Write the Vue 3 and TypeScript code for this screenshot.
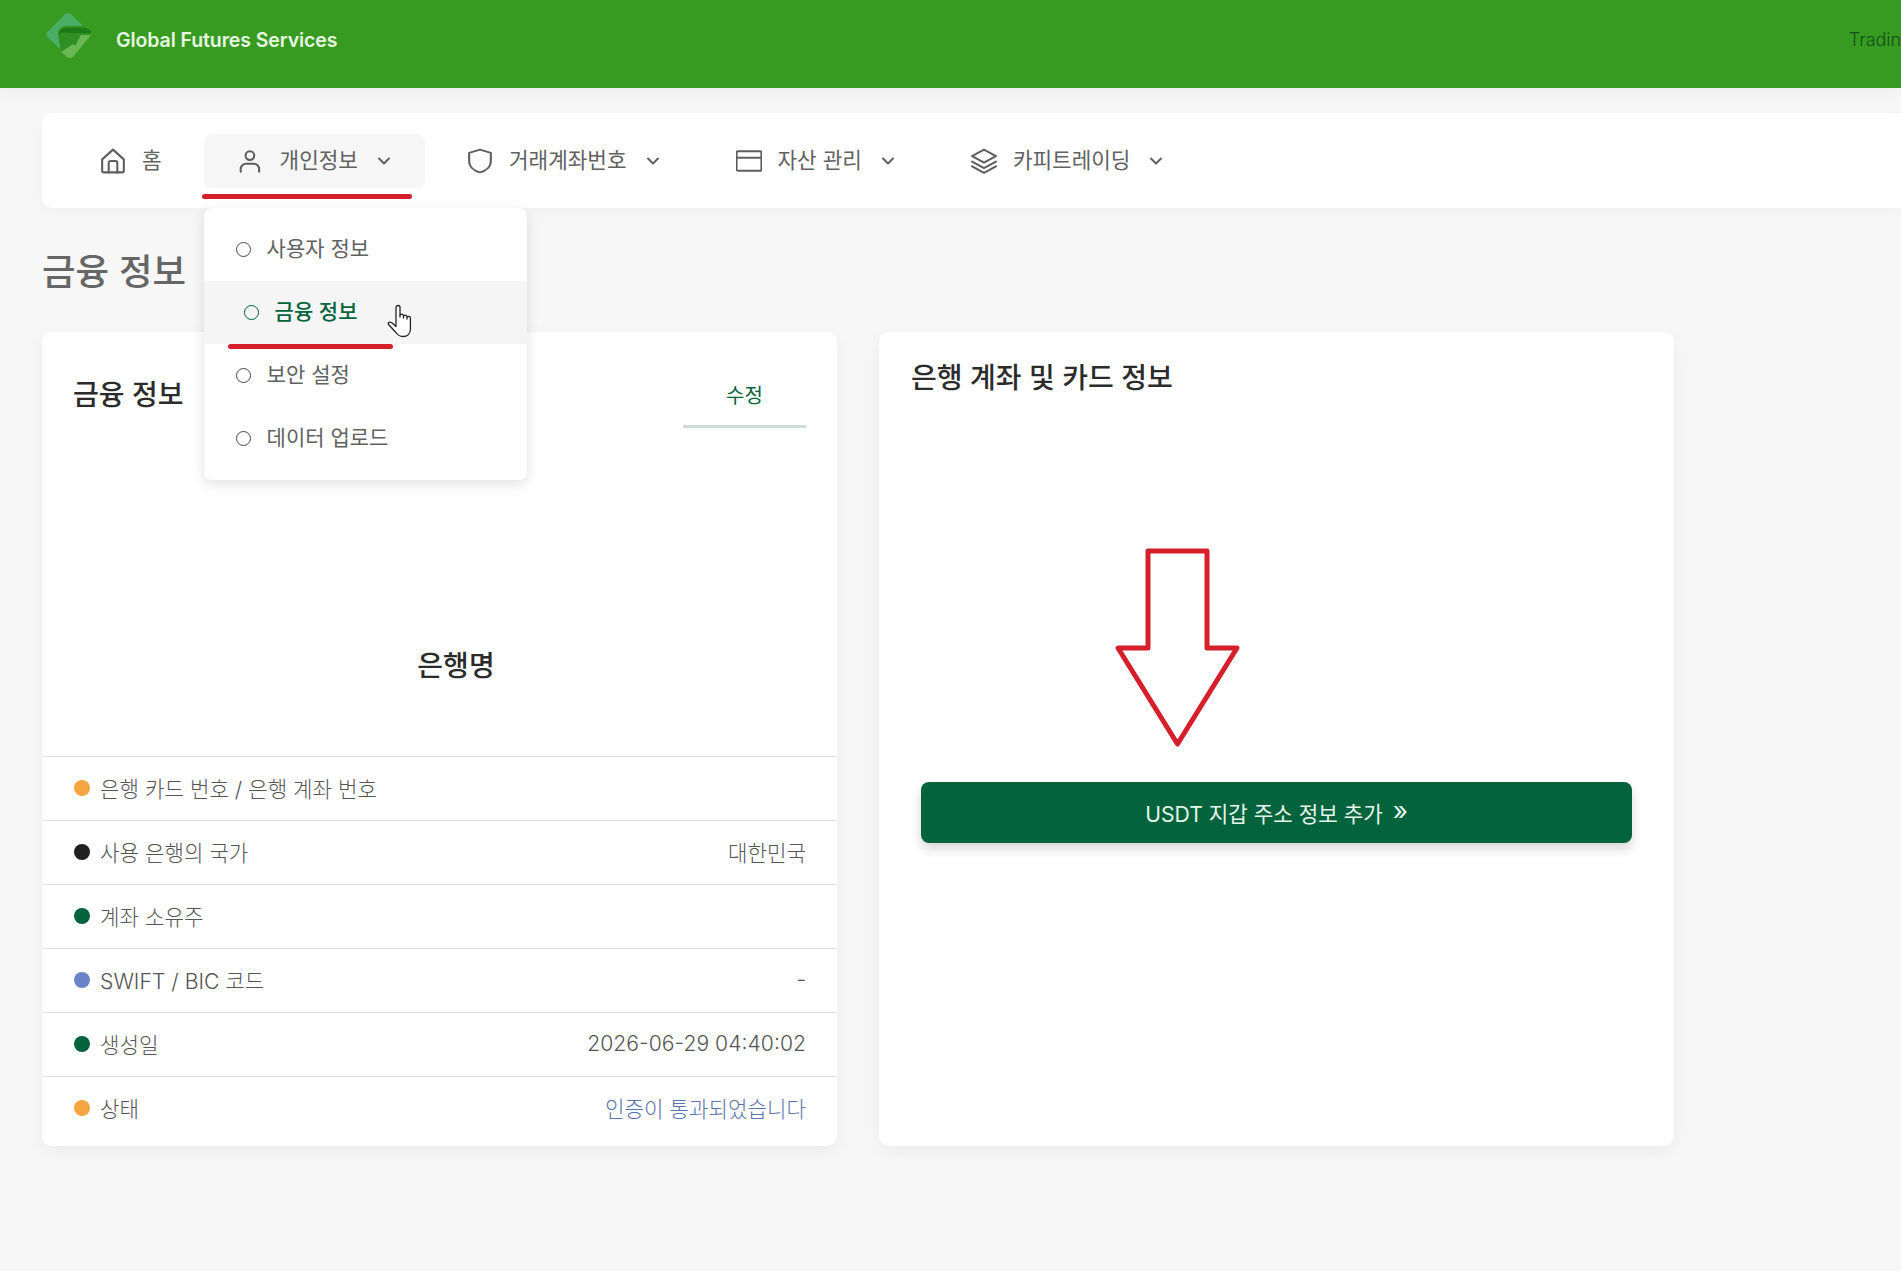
<script setup lang="ts">
interface InfoRow {
  label: string
  value?: string
  dot: string
  link?: boolean
}

type NavIcon = 'home' | 'user' | 'shield' | 'card' | 'layers'

const navItems: { label: string; icon: NavIcon; caret: boolean; active?: boolean }[] = [
  { label: '홈', icon: 'home', caret: false },
  { label: '개인정보', icon: 'user', caret: true, active: true },
  { label: '거래계좌번호', icon: 'shield', caret: true },
  { label: '자산 관리', icon: 'card', caret: true },
  { label: '카피트레이딩', icon: 'layers', caret: true },
]

const menuItems = [
  { label: '사용자 정보' },
  { label: '금융 정보', hover: true },
  { label: '보안 설정' },
  { label: '데이터 업로드' },
]

const rows: InfoRow[] = [
  { label: '은행 카드 번호 / 은행 계좌 번호', dot: '#f7a540' },
  { label: '사용 은행의 국가', value: '대한민국', dot: '#1f2021' },
  { label: '계좌 소유주', dot: '#03633d' },
  { label: 'SWIFT / BIC 코드', value: '-', dot: '#6b83cb' },
  { label: '생성일', value: '2026-06-29 04:40:02', dot: '#03633d' },
  { label: '상태', value: '인증이 통과되었습니다', dot: '#f7a540', link: true },
]
</script>

<template>
  <div class="page">
    <header class="topbar">
      <svg class="logo" viewBox="0 0 46 46" width="46" height="46" aria-hidden="true">
        <path d="M1 19.500 19 1.200Q22-.8 25 1.200L37 13H21Q13 13 12 21L15 37 1 23.500Q-.5 21.500 1 19.500Z" fill="#4bae66" />
        <path d="M12 21Q13 13 21 13H37L45 21 35 22 29 33 27 31 15 39Z" fill="#2f8f22" />
        <path d="M12.500 21Q14 15 21 15H40L45 18V20H25Q17 18 12.500 21Z" fill="#1f7a16" />
        <path d="M15 39 27 31 29 33 35 22H45L27 44Q24 46 21 44Z" fill="#6cb755" />
      </svg>
      <span class="brand">Global Futures Services</span>
      <span class="trading">Trading</span>
    </header>

    <nav class="navbar">
      <div v-for="item in navItems" :key="item.label" class="nav-item" :class="{ active: item.active }">
        <svg class="nav-icon" viewBox="0 0 24 24" width="26" height="26" aria-hidden="true">
          <template v-if="item.icon === 'home'">
            <path d="M2 10.500 12 1.500l10 9V21a1.500 1.500 0 0 1-1.500 1.500h-17A1.500 1.500 0 0 1 2 21z" />
            <path d="M8 22.500V14a2 2 0 0 1 2-2h4a2 2 0 0 1 2 2v8.500" />
          </template>
          <template v-else-if="item.icon === 'user'">
            <circle cx="11" cy="7" r="4" />
            <path d="M2.500 22v-2.500a5 5 0 0 1 5-5h7a5 5 0 0 1 5 5V22" />
          </template>
          <path v-else-if="item.icon === 'shield'" d="M12 1.500 22 4.500v7.500c0 5-4 9-10 10.500C6 21 2 17 2 12V4.500z" />
          <template v-else-if="item.icon === 'card'">
            <rect x="0.500" y="3" width="23" height="18" rx="1.500" />
            <path d="M0.500 9h23" />
          </template>
          <template v-else>
            <path d="M12 1.500 23 7.500 12 13.500 1 7.500z" />
            <path d="M1 12.500 12 18.500l11-6" />
            <path d="M1 17 12 23l11-6" />
          </template>
        </svg>
        <span class="nav-label">{{ item.label }}</span>
        <svg v-if="item.caret" class="caret" viewBox="0 0 14 14" width="14" height="14" aria-hidden="true">
          <path d="M2 4.500 7 9.500l5-5" />
        </svg>

        <template v-if="item.active">
          <span class="mark nav-mark"></span>
          <ul class="dropdown">
            <li v-for="entry in menuItems" :key="entry.label" class="drop-row" :class="{ hover: entry.hover }">
              <span class="ring"></span>
              <span>{{ entry.label }}</span>
              <template v-if="entry.hover">
                <span class="mark menu-mark"></span>
                <svg class="hand" viewBox="0 0 26 34" width="26" height="34" aria-hidden="true">
                  <path d="M9 19V3.500a2 2 0 0 1 4 0V13l0-1.500a1.800 1.800 0 0 1 3.500 0V14l0-1.500a1.800 1.800 0 0 1 3.500 0V15l0-1a1.700 1.700 0 0 1 3.400 0v11c0 4.500-3 7.500-7.400 7.500-3.500 0-5.500-1.500-7.500-4.500L1.500 20.500c-.8-1.300.2-2.500 1.500-2.300C5 18.500 7.500 21 9 22.500z" />
                </svg>
              </template>
            </li>
          </ul>
        </template>
      </div>
    </nav>

    <h1 class="page-title">금융 정보</h1>

    <main class="columns">
      <section class="panel">
        <div class="panel-head">
          <h2 class="panel-title">금융 정보</h2>
          <div class="edit-tab">수정</div>
        </div>
        <div class="bank-name">은행명</div>
        <ul class="rows">
          <li v-for="row in rows" :key="row.label" class="row">
            <span class="dot" :style="{ background: row.dot }"></span>
            <span class="row-label">{{ row.label }}</span>
            <span v-if="row.value" class="row-value" :class="{ link: row.link }">{{ row.value }}</span>
          </li>
        </ul>
      </section>

      <section class="panel wallet">
        <h2 class="panel-title wallet-title">은행 계좌 및 카드 정보</h2>
        <svg class="arrow" viewBox="0 0 126 202" width="126" height="202" aria-hidden="true">
          <path d="M33 3h59v97h30L62.500 196 3 100h30z" />
        </svg>
        <button class="add-btn" type="button">
          USDT 지갑 주소 정보 추가
          <span class="chevrons">»</span>
        </button>
      </section>
    </main>
  </div>
</template>

<style>
html,
body {
  margin: 0;
  background: #f7f7f7;
}
</style>

<style scoped>
.page {
  width: 100%;
  height: 1271px;
  overflow: hidden;
  background: #f7f7f7;
  font-family: Inter, 'Noto Sans CJK KR', sans-serif;
  color: #5c5c5c;
}

.topbar {
  display: flex;
  align-items: center;
  height: 88px;
  padding-left: 46px;
  background: #379a21;
  box-shadow: 0 6px 16px rgba(0, 0, 0, 0.04);
  position: relative;
  white-space: nowrap;
}

.logo {
  flex: none;
  margin-top: -16px;
}

.brand {
  margin-left: 24px;
  margin-top: -9px;
  font-size: 19.500px;
  font-weight: 600;
  color: #e6f7e0;
  letter-spacing: -0.1px;
}

.trading {
  margin-left: auto;
  margin-right: -11px;
  margin-top: -9px;
  font-size: 18px;
  font-weight: 300;
  color: #14501a;
}

.navbar {
  display: flex;
  align-items: center;
  height: 95px;
  margin: 25px 0 0 42px;
  padding-left: 24px;
  gap: 8px;
  background: #fff;
  border-radius: 10px 0 0 10px;
  box-shadow: 0 4px 14px rgba(0, 0, 0, 0.03);
}

.nav-item {
  position: relative;
  display: flex;
  align-items: center;
  height: 54px;
  padding: 0 34px;
  gap: 16px;
  border-radius: 8px;
  font-size: 21.300px;
  line-height: 28px;
  color: #616161;
  white-space: nowrap;
}

.nav-label {
  margin-top: -2px;
}

.nav-item.active {
  background: #f6f6f6;
}

.nav-icon {
  flex: none;
  fill: none;
  stroke: #5e5e5e;
  stroke-width: 1.900;
  stroke-linejoin: round;
  stroke-linecap: round;
}

.caret {
  flex: none;
  margin-left: 3px;
  fill: none;
  stroke: #5e5e5e;
  stroke-width: 1.900;
  stroke-linecap: round;
  stroke-linejoin: round;
}

.mark {
  position: absolute;
  height: 5px;
  background: #d5202c;
  border-radius: 3px;
}

.nav-mark {
  left: -2px;
  top: 60px;
  width: 210px;
}

.dropdown {
  position: absolute;
  left: 0;
  top: 74px;
  z-index: 5;
  width: 323px;
  margin: 0;
  padding: 10px 0;
  list-style: none;
  background: #fff;
  border-radius: 8px;
  box-shadow: 0 4px 14px rgba(0, 0, 0, 0.12);
}

.drop-row {
  position: relative;
  display: flex;
  align-items: center;
  height: 63px;
  padding-left: 32px;
  gap: 16px;
  font-size: 21px;
}

.drop-row.hover {
  padding-left: 40px;
  background: #f5f5f5;
  color: #03633d;
  font-weight: 500;
}

.ring {
  flex: none;
  width: 15px;
  height: 15px;
  box-sizing: border-box;
  border: 1.500px solid #484848;
  border-radius: 50%;
}

.drop-row.hover .ring {
  border-color: #03633d;
}

.menu-mark {
  left: 24px;
  top: 63px;
  width: 165px;
}

.hand {
  position: absolute;
  left: 183px;
  top: 23px;
  fill: #fff;
  stroke: #222;
  stroke-width: 1.300;
  stroke-linejoin: round;
}

.page-title {
  margin: 40px 0 0 42px;
  font-size: 36.500px;
  line-height: 48px;
  font-weight: 500;
  color: #666;
}

.columns {
  display: grid;
  grid-template-columns: 795px 795px;
  gap: 42px;
  margin: 36px 0 0 42px;
}

.panel {
  position: relative;
  height: 814px;
  background: #fff;
  border-radius: 10px;
  box-shadow: 0 6px 18px rgba(0, 0, 0, 0.05);
}

.panel-head {
  display: flex;
  justify-content: space-between;
  height: 95px;
  padding: 0 31px;
}

.panel-title {
  margin: 45px 0 0;
  font-size: 28px;
  line-height: 36px;
  font-weight: 500;
  color: #2b2b2b;
}

.edit-tab {
  width: 123px;
  height: 66px;
  margin-top: 30px;
  box-sizing: border-box;
  border-bottom: 3px solid #cfd9d6;
  text-align: center;
  font-size: 20px;
  line-height: 68px;
  color: #03633d;
}

.bank-name {
  margin: 219px 0 0 0;
  padding-left: 33px;
  text-align: center;
  font-size: 28px;
  line-height: 40px;
  font-weight: 500;
  color: #2b2b2b;
}

.rows {
  margin: 70px 0 0;
  padding: 0;
  list-style: none;
}

.row {
  display: flex;
  align-items: center;
  box-sizing: border-box;
  height: 64px;
  padding: 0 31px 3px 32px;
  gap: 10px;
  border-top: 1px solid #e2e2e2;
  font-size: 21.200px;
  font-weight: 300;
  color: #555;
}

.dot {
  flex: none;
  width: 16px;
  height: 16px;
  margin-top: 1px;
  border-radius: 50%;
}

.row-value {
  margin-left: auto;
}

.row-value.link {
  color: #5a74ad;
}

.wallet {
  display: flex;
  flex-direction: column;
  padding: 0 42px;
  box-sizing: border-box;
}

.wallet-title {
  margin: 28px 0 0 -10px;
}

.arrow {
  position: absolute;
  left: 236px;
  top: 216px;
  fill: none;
  stroke: #d5202c;
  stroke-width: 5;
  stroke-linejoin: round;
}

.add-btn {
  display: block;
  width: 711px;
  height: 61px;
  margin-top: 386px;
  border: 0;
  border-radius: 8px;
  background: #03633d;
  box-shadow: 0 6px 12px rgba(0, 0, 0, 0.16);
  font: inherit;
  font-size: 21.200px;
  color: #e5f5ec;
}

.chevrons {
  display: inline-block;
  margin-left: 4px;
  font-size: 26px;
  line-height: 1;
  transform: translateY(-2px);
}
</style>
